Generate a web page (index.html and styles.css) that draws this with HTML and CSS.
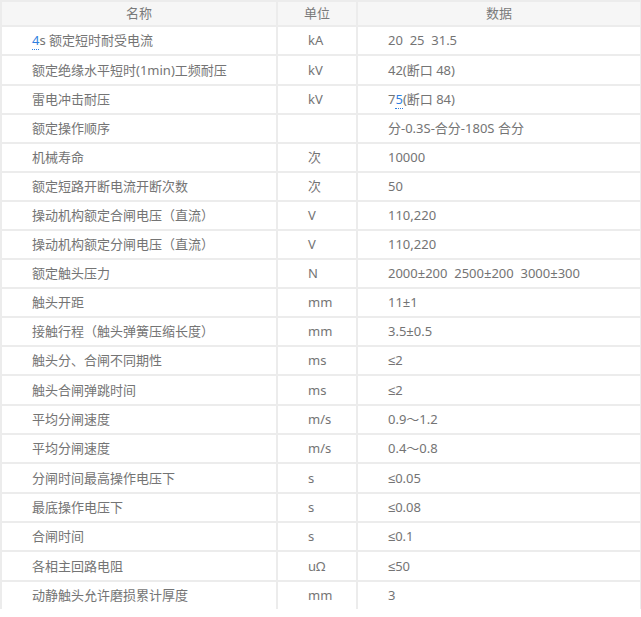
FILE: index.html
```html
<!DOCTYPE html>
<html lang="zh-CN">
<head>
<meta charset="utf-8">
<title>参数表</title>
<link rel="stylesheet" href="styles.css">
</head>
<body>
<table class="spec">
  <colgroup>
    <col class="c-name">
    <col class="c-unit">
    <col class="c-data">
  </colgroup>
  <thead>
    <tr><th>名称</th><th>单位</th><th>数据</th></tr>
  </thead>
  <tbody>
    <tr><td><span class="lnk">4</span>s 额定短时耐受电流</td><td>kA</td><td>20&nbsp; 25&nbsp; 31.5</td></tr>
    <tr class="tall"><td>额定绝缘水平短时(1min)工频耐压</td><td>kV</td><td>42(断口 48)</td></tr>
    <tr><td>雷电冲击耐压</td><td>kV</td><td>7<span class="lnk">5</span>(断口 84)</td></tr>
    <tr><td>额定操作顺序</td><td></td><td>分-0.3S-合分-180S 合分</td></tr>
    <tr><td>机械寿命</td><td>次</td><td>10000</td></tr>
    <tr><td>额定短路开断电流开断次数</td><td>次</td><td>50</td></tr>
    <tr><td>操动机构额定合闸电压（直流）</td><td>V</td><td>110,220</td></tr>
    <tr><td>操动机构额定分闸电压（直流）</td><td>V</td><td>110,220</td></tr>
    <tr><td>额定触头压力</td><td>N</td><td>2000±200&nbsp; 2500±200&nbsp; 3000±300</td></tr>
    <tr><td>触头开距</td><td>mm</td><td>11±1</td></tr>
    <tr><td>接触行程（触头弹簧压缩长度）</td><td>mm</td><td>3.5±0.5</td></tr>
    <tr><td>触头分、合闸不同期性</td><td>ms</td><td>≤2</td></tr>
    <tr class="tall"><td>触头合闸弹跳时间</td><td>ms</td><td>≤2</td></tr>
    <tr><td>平均分闸速度</td><td>m/s</td><td>0.9～1.2</td></tr>
    <tr><td>平均分闸速度</td><td>m/s</td><td>0.4～0.8</td></tr>
    <tr class="tall"><td>分闸时间最高操作电压下</td><td>s</td><td>≤0.05</td></tr>
    <tr><td>最底操作电压下</td><td>s</td><td>≤0.08</td></tr>
    <tr><td>合闸时间</td><td>s</td><td>≤0.1</td></tr>
    <tr class="tall"><td>各相主回路电阻</td><td>uΩ</td><td>≤50</td></tr>
    <tr><td>动静触头允许磨损累计厚度</td><td>mm</td><td>3</td></tr>
  </tbody>
</table>
</body>
</html>
```
FILE: styles.css
```css
html, body {
  margin: 0;
  padding: 0;
  background: #fff;
}
body {
  font-family: "Noto Sans", "Liberation Sans", "Noto Sans CJK SC", sans-serif;
  font-size: 13px;
  color: #747474;
}
.spec {
  width: 640px;
  border-collapse: collapse;
  table-layout: fixed;
  border: 2px solid #ececec;
  border-bottom: none;
}
.c-name { width: 276px; }
.c-unit { width: 80px; }
.c-data { width: 284px; }
.spec th,
.spec td {
  border: 2px solid #ececec;
  height: 27px;
  padding: 0 0 0 30px;
  line-height: 17px;
  text-align: left;
  font-weight: normal;
  white-space: nowrap;
}
.spec th {
  background: #f6f6f6;
  text-align: center;
  padding: 0;
  height: 23px;
  color: #7a7a7a;
}
.spec tr.tall td {
  height: 28px;
}
.spec tbody tr:last-child td {
  border-bottom: none;
}
.lnk {
  color: #2f7fe0;
  border-bottom: 1px dotted #2f7fe0;
}
```
